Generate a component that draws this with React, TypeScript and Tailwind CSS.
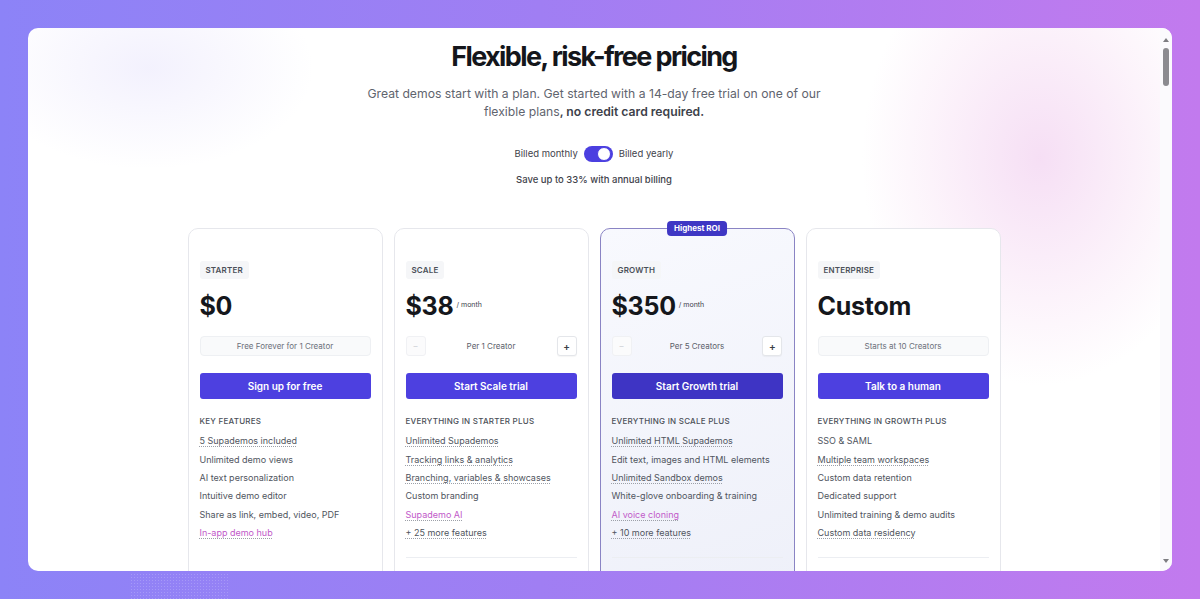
import React from "react";

type Feature = { t: string; u?: boolean; pink?: boolean };
type Plan = {
  tag: string;
  price: string;
  month?: boolean;
  box: string;
  stepper?: boolean;
  cta: string;
  head: string;
  features: Feature[];
  featured?: boolean;
  divider?: boolean;
};

const plans: Plan[] = [
  {
    tag: "STARTER",
    price: "$0",
    box: "Free Forever for 1 Creator",
    cta: "Sign up for free",
    head: "KEY FEATURES",
    features: [
      { t: "5 Supademos included", u: true },
      { t: "Unlimited demo views" },
      { t: "AI text personalization" },
      { t: "Intuitive demo editor" },
      { t: "Share as link, embed, video, PDF" },
      { t: "In-app demo hub", u: true, pink: true },
    ],
  },
  {
    tag: "SCALE",
    price: "$38",
    month: true,
    box: "Per 1 Creator",
    stepper: true,
    cta: "Start Scale trial",
    head: "EVERYTHING IN STARTER PLUS",
    divider: true,
    features: [
      { t: "Unlimited Supademos", u: true },
      { t: "Tracking links & analytics", u: true },
      { t: "Branching, variables & showcases", u: true },
      { t: "Custom branding" },
      { t: "Supademo AI", u: true, pink: true },
      { t: "+ 25 more features", u: true },
    ],
  },
  {
    tag: "GROWTH",
    price: "$350",
    month: true,
    box: "Per 5 Creators",
    stepper: true,
    cta: "Start Growth trial",
    head: "EVERYTHING IN SCALE PLUS",
    featured: true,
    divider: true,
    features: [
      { t: "Unlimited HTML Supademos", u: true },
      { t: "Edit text, images and HTML elements" },
      { t: "Unlimited Sandbox demos", u: true },
      { t: "White-glove onboarding & training" },
      { t: "AI voice cloning", u: true, pink: true },
      { t: "+ 10 more features", u: true },
    ],
  },
  {
    tag: "ENTERPRISE",
    price: "Custom",
    box: "Starts at 10 Creators",
    cta: "Talk to a human",
    head: "EVERYTHING IN GROWTH PLUS",
    divider: true,
    features: [
      { t: "SSO & SAML" },
      { t: "Multiple team workspaces", u: true },
      { t: "Custom data retention" },
      { t: "Dedicated support" },
      { t: "Unlimited training & demo audits" },
      { t: "Custom data residency", u: true },
    ],
  },
];

function Card({ p }: { p: Plan }) {
  return (
    <div
      className={
        "relative w-[195px] shrink-0 rounded-[10px] border px-[11px] pt-[32px] " +
        (p.featured
          ? "border-[#8a84c4] bg-[linear-gradient(160deg,#f8f9fe_0%,#eef0f9_100%)]"
          : "border-[#e6e7ec] bg-white")
      }
    >
      {p.featured && (
        <div className="absolute left-1/2 top-[-8px] -translate-x-1/2 rounded-[4px] bg-[#3f37c4] px-[7px] py-[2px] text-[8px] font-bold leading-[11px] text-white">
          Highest ROI
        </div>
      )}
      <div className="flex">
        <span className="rounded-[3px] bg-[#f5f6f8] px-[6px] py-[4px] text-[8px] font-semibold leading-[10px] tracking-[0.02em] text-[#4b5058]">
          {p.tag}
        </span>
      </div>
      <div className="mt-[12px] flex h-[30px] items-center">
        <span className="text-[25px] font-bold leading-[30px] tracking-[-0.01em] text-[#15171c]">
          {p.price}
        </span>
        {p.month && (
          <span className="ml-[3px] mb-[2px] text-[7px] text-[#3d414a]">/ month</span>
        )}
      </div>
      {p.stepper ? (
        <div className="mt-[15px] flex h-[20px] items-center justify-between">
          <div className="flex h-[20px] w-[20px] items-center justify-center rounded-[3px] border border-[#f0f1f4] bg-[#fbfbfc] text-[8px] text-[#c9ccd2]">
            –
          </div>
          <span className="text-[8px] text-[#5b606a]">{p.box}</span>
          <div className="flex h-[20px] w-[20px] items-center justify-center rounded-[3px] border border-[#e4e6ea] bg-white text-[10px] font-semibold text-[#3a3e46] shadow-[0_1px_1px_rgba(0,0,0,0.04)]">
            +
          </div>
        </div>
      ) : (
        <div className="mt-[15px] flex h-[20px] items-center justify-center rounded-[4px] border border-[#eef0f3] bg-[#f9fafb] text-[8px] text-[#6b707a]">
          {p.box}
        </div>
      )}
      <div
        className={
          "mt-[17px] flex h-[26px] items-center justify-center rounded-[3px] text-[10px] font-semibold text-white " +
          (p.featured ? "bg-[#3e34c4]" : "bg-[#4d40e0]")
        }
      >
        {p.cta}
      </div>
      <div className="mt-[15px] text-[8px] font-medium leading-[14px] tracking-[0.03em] text-[#4b5058]">
        {p.head}
      </div>
      <ul className="mt-[4px]">
        {p.features.map((f) => (
          <li
            key={f.t}
            className={
              "text-[9px] leading-[18.4px] " +
              (f.pink ? "text-[#c15ac9] " : "text-[#50555e] ") +
              (f.u
                ? "underline decoration-dotted decoration-[#9ca0a8] underline-offset-[2px]"
                : "")
            }
          >
            {f.t}
          </li>
        ))}
      </ul>
      <div className={"mt-[14px] h-px " + (p.divider ? "bg-[#eceef2]" : "bg-transparent")} />
      <div className="h-[40px]" />
    </div>
  );
}

export default function App() {
  return (
    <div
      className="relative h-[599px] w-full overflow-hidden bg-[linear-gradient(90deg,#8c83f7_0%,#a07ef3_45%,#c27aee_100%)] p-[28px]"
      style={{ fontFamily: "Inter, 'Noto Sans', sans-serif" }}
    >
      <div className="pointer-events-none absolute bottom-0 left-[130px] h-[26px] w-[100px] bg-[radial-gradient(circle,rgba(255,255,255,0.18)_0.6px,transparent_0.9px)] bg-[length:3px_3px]" />
      <div className="relative flex h-[543px] overflow-hidden rounded-[10px] bg-white">
        <div className="relative flex-1 overflow-hidden">
          <div className="pointer-events-none absolute left-[-60px] top-[-70px] h-[220px] w-[360px] bg-[radial-gradient(ellipse_at_center,rgba(200,192,248,0.22)_0%,rgba(255,255,255,0)_65%)]" />
          <div className="pointer-events-none absolute right-[-60px] top-[-100px] h-[460px] w-[360px] bg-[radial-gradient(ellipse_at_center,rgba(238,196,236,0.55)_0%,rgba(246,218,242,0.3)_45%,rgba(255,255,255,0)_70%)]" />
          <div className="relative flex flex-col items-center pt-[12px]">
            <h1 className="text-[27px] font-bold leading-[34px] tracking-[-0.06em] text-[#14161b]">
              Flexible, risk-free pricing
            </h1>
            <div className="mt-[11px] flex flex-col items-center text-[12.2px] leading-[18px] text-[#5f646e]">
              <span>Great demos start with a plan. Get started with a 14-day free trial on one of our</span>
              <span>
                flexible plans<b className="font-semibold text-[#3d414a]">, no credit card required.</b>
              </span>
            </div>
            <div className="mt-[25px] flex items-center gap-[6px] text-[9.5px] text-[#3f434b]">
              <span>Billed monthly</span>
              <div className="flex h-[16px] w-[29px] items-center justify-end rounded-full bg-[#4b3fe0] p-[2px]">
                <div className="h-[14px] w-[14px] rounded-full border border-[#4b3fe0] bg-white" />
              </div>
              <span>Billed yearly</span>
            </div>
            <div className="mt-[11px] text-[9.5px] font-medium text-[#3f434b]">
              Save up to 33% with annual billing
            </div>
            <div className="mt-[41px] flex gap-[11px]">
              {plans.map((p) => (
                <Card key={p.tag} p={p} />
              ))}
            </div>
          </div>
        </div>
        <div className="flex w-[12px] flex-col items-center bg-[#fbfafd] py-[4px]">
          <div className="mt-[6px] h-0 w-0 border-x-[3.5px] border-b-[4px] border-x-transparent border-b-[#7d7d82]" />
          <div className="mt-[6px] h-[38px] w-[6px] rounded-full bg-[#8b8b90]" />
          <div className="flex-1" />
          <div className="mb-[4px] h-0 w-0 border-x-[3.5px] border-t-[4px] border-x-transparent border-t-[#7d7d82]" />
        </div>
      </div>
    </div>
  );
}
